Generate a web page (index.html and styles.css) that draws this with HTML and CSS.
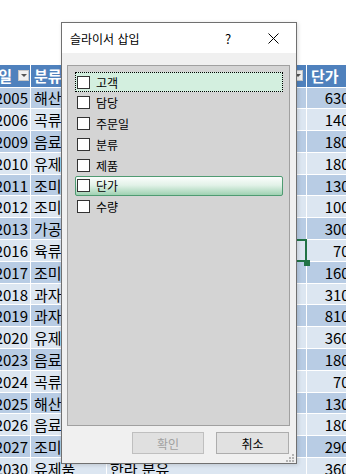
FILE: index.html
```html
<!DOCTYPE html>
<html lang="ko">
<head>
  <meta charset="UTF-8" />
  <title>슬라이서 삽입</title>
  <link rel="stylesheet" href="styles.css">
</head>
<body>
  <!-- Sheet behind the dialog -->
  <div class="sheet">
    <div class="row head">
      <div class="c a"><span class="nowrap">주문일</span><span class="dd"></span></div>
      <div class="c b">분류</div>
      <div class="c p">제품<span class="dd"></span></div>
      <div class="c n">단가</div>
    </div>
    <div class="row dark"><div class="c a">2005</div><div class="c b">해산물</div><div class="c p">오징어 젓갈</div><div class="c n">6300</div></div>
    <div class="row light"><div class="c a">2006</div><div class="c b">곡류</div><div class="c p">현미 찹쌀</div><div class="c n">1400</div></div>
    <div class="row dark"><div class="c a">2009</div><div class="c b">음료</div><div class="c p">녹차</div><div class="c n">1800</div></div>
    <div class="row light"><div class="c a">2010</div><div class="c b">유제품</div><div class="c p">치즈</div><div class="c n">1800</div></div>
    <div class="row dark"><div class="c a">2011</div><div class="c b">조미료</div><div class="c p">간장</div><div class="c n">1300</div></div>
    <div class="row light"><div class="c a">2012</div><div class="c b">조미료</div><div class="c p">식초</div><div class="c n">1000</div></div>
    <div class="row dark"><div class="c a">2013</div><div class="c b">가공식품</div><div class="c p">두부</div><div class="c n">3000</div></div>
    <div class="row light"><div class="c a">2016</div><div class="c b">육류</div><div class="c p sel">훈제 오리</div><div class="c n">700</div></div>
    <div class="row dark"><div class="c a">2017</div><div class="c b">조미료</div><div class="c p">고추장</div><div class="c n">1600</div></div>
    <div class="row light"><div class="c a">2018</div><div class="c b">과자류</div><div class="c p">초콜릿</div><div class="c n">3100</div></div>
    <div class="row dark"><div class="c a">2019</div><div class="c b">과자류</div><div class="c p">과일 캔디</div><div class="c n">8100</div></div>
    <div class="row light"><div class="c a">2020</div><div class="c b">유제품</div><div class="c p">버터</div><div class="c n">3600</div></div>
    <div class="row dark"><div class="c a">2023</div><div class="c b">음료</div><div class="c p">콜라</div><div class="c n">1800</div></div>
    <div class="row light"><div class="c a">2024</div><div class="c b">곡류</div><div class="c p">보리</div><div class="c n">700</div></div>
    <div class="row dark"><div class="c a">2025</div><div class="c b">해산물</div><div class="c p">건조 다시마</div><div class="c n">1300</div></div>
    <div class="row light"><div class="c a">2026</div><div class="c b">음료</div><div class="c p">레몬 주스</div><div class="c n">1800</div></div>
    <div class="row dark"><div class="c a">2027</div><div class="c b">조미료</div><div class="c p">된장</div><div class="c n">2900</div></div>
    <div class="row light"><div class="c a">2030</div><div class="c b">유제품</div><div class="c p">한라 분유</div><div class="c n">3600</div></div>
  </div>

  <!-- Slicer dialog -->
  <div class="dialog">
    <div class="titlebar">
      <span class="title">슬라이서 삽입</span>
      <span class="tb-btn help">?</span>
      <span class="tb-btn close">
        <svg width="11" height="11" viewBox="0 0 11 11"><path d="M0.5 0.5 L10.5 10.5 M10.5 0.5 L0.5 10.5" stroke="#000" stroke-width="1" fill="none"/></svg>
      </span>
    </div>
    <div class="dlg-body">
      <div class="fields">
        <div class="item focus"><span class="box"></span>고객</div>
        <div class="item"><span class="box"></span>담당</div>
        <div class="item"><span class="box"></span>주문일</div>
        <div class="item"><span class="box"></span>분류</div>
        <div class="item"><span class="box"></span>제품</div>
        <div class="item hover"><span class="box"></span>단가</div>
        <div class="item"><span class="box"></span>수량</div>
      </div>
      <div class="buttons">
        <button class="btn" disabled>확인</button>
        <button class="btn">취소</button>
      </div>
    </div>
    <svg class="grip" width="8" height="8" viewBox="0 0 8 8">
      <rect x="6" y="0" width="2" height="2" fill="#b4b4b4"/>
      <rect x="3" y="3" width="2" height="2" fill="#b4b4b4"/>
      <rect x="6" y="3" width="2" height="2" fill="#b4b4b4"/>
      <rect x="0" y="6" width="2" height="2" fill="#b4b4b4"/>
      <rect x="3" y="6" width="2" height="2" fill="#b4b4b4"/>
      <rect x="6" y="6" width="2" height="2" fill="#b4b4b4"/>
    </svg>
  </div>
</body>
</html>
```

FILE: styles.css
```css
/* Page */
html, body {
  margin: 0;
  overflow: hidden;
  height: 100%;
  background: #fff;
}
body {
  font-family: "Noto Sans CJK KR", "Noto Sans", sans-serif;
  position: relative;
}

/* Sheet table */
.sheet {
  display: flex;
  flex-direction: column;
  gap: 1px;
  margin-top: 65px;
  width: max-content;
  background: #fff;
}
.row {
  display: grid;
  grid-template-columns: 30px 75px 199px 56px;
  column-gap: 1px;
  height: 20.8px;
}
.row.head {
  height: 21.5px;
}
.c {
  display: flex;
  align-items: center;
  font-size: 15px;
  color: #000;
  white-space: nowrap;
  overflow: hidden;
  line-height: 1;
}
.dark .c { background: #b8cce4; }
.light .c { background: #dce6f1; }
.head .c {
  background: #4f81bd;
  color: #fff;
  font-weight: bold;
}
.c.a {
  justify-content: flex-end;
  padding-right: 2px;
}
.head .c.a {
  padding-right: 1px;
  gap: 6px;
}
.nowrap { flex-shrink: 0; }
.c.b, .c.p {
  padding-left: 3px;
}
.head .c.p {
  justify-content: space-between;
  padding-right: 3px;
}
.c.n {
  justify-content: flex-end;
  padding-right: 5px;
}
.head .c.n {
  justify-content: flex-start;
  padding-left: 4px;
}

/* Filter dropdown button in header */
.dd {
  flex-shrink: 0;
  width: 11px;
  height: 11px;
  box-sizing: border-box;
  background: #f0f0f0;
  border: 1px solid #c6c6c6;
  display: flex;
  align-items: center;
  justify-content: center;
}
.dd::after {
  content: "";
  border-left: 3px solid transparent;
  border-right: 3px solid transparent;
  border-top: 3px solid #555;
}

/* Selected cell */
.c.sel {
  overflow: visible;
  position: relative;
  outline: 2px solid #217346;
  outline-offset: -1px;
  z-index: 2;
}
.c.sel::after {
  content: "";
  position: absolute;
  right: -4px;
  bottom: -5px;
  width: 6px;
  height: 6px;
  background: #217346;
}

/* Dialog */
.dialog {
  position: absolute;
  left: 61px;
  top: 22px;
  width: 236px;
  height: 442px;
  box-sizing: border-box;
  border: 1px solid #707070;
  background: #f0f0f0;
  display: flex;
  flex-direction: column;
  font-size: 12px;
  z-index: 5;
  box-shadow: 1px 1px 4px rgba(0,0,0,0.15);
}
.titlebar {
  height: 30px;
  background: #fff;
  display: flex;
  align-items: center;
  padding-left: 8px;
}
.title {
  flex: 1;
  font-size: 12px;
  color: #000;
}
.tb-btn {
  height: 30px;
  display: flex;
  align-items: center;
  justify-content: center;
}
.help {
  width: 46px;
  font-size: 13px;
}
.close {
  width: 45px;
}
.dlg-body {
  flex: 1;
  display: flex;
  flex-direction: column;
  gap: 6px;
  padding: 12px 6px 9px 5px;
}
.fields {
  flex: 1;
  border: 1px solid #a0a0a0;
  background: #d4d4d4;
  padding: 6px 6px 0 7px;
  display: flex;
  flex-direction: column;
  gap: 0.8px;
}
.item {
  height: 20px;
  box-sizing: border-box;
  border: 1px solid transparent;
  display: flex;
  align-items: center;
  padding-left: 1px;
  color: #000;
}
.item.focus {
  background: #d3efdf;
  border: 1px dotted #000;
}
.item.hover {
  background: linear-gradient(#fbfdfc, #e2f2e8 45%, #9fd1b2);
  border: 1px solid #4f9b72;
  border-radius: 2px;
}
.box {
  width: 13px;
  height: 13px;
  box-sizing: border-box;
  border: 1px solid #333;
  background: #fff;
  margin-right: 6px;
}
.buttons {
  display: flex;
  justify-content: flex-end;
  gap: 12px;
  padding-right: 1px;
}
.btn {
  width: 73px;
  height: 22px;
  box-sizing: border-box;
  border: 1px solid #adadad;
  background: #e1e1e1;
  font-family: inherit;
  font-size: 12px;
  color: #000;
  padding: 0;
}
.btn:disabled {
  width: 72px;
  border-color: #bfbfbf;
  background: #e0e0e0;
  color: #a0a0a0;
}
.grip {
  position: absolute;
  right: 2px;
  bottom: 1px;
}
```
